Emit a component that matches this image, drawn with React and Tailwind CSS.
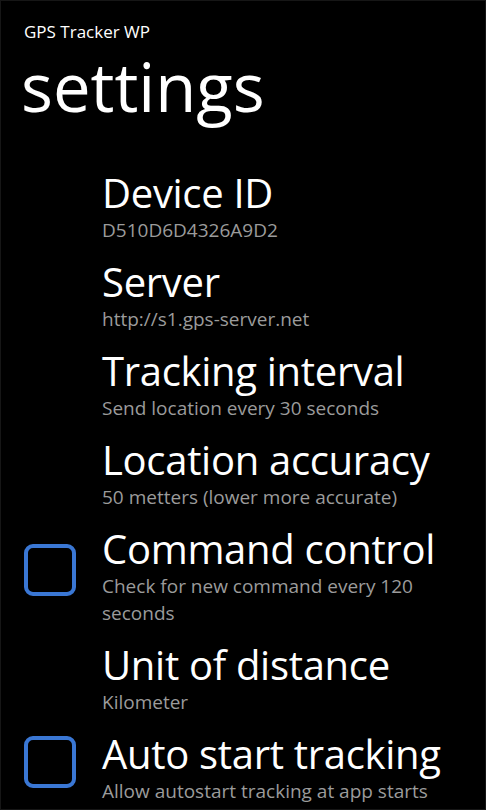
import React from "react";

const items = [
  { title: "Device ID", sub: ["D510D6D4326A9D2"] },
  { title: "Server", sub: ["http://s1.gps-server.net"] },
  { title: "Tracking interval", sub: ["Send location every 30 seconds"] },
  { title: "Location accuracy", sub: ["50 metters (lower more accurate)"] },
  { title: "Command control", sub: ["Check for new command every 120", "seconds"], check: true },
  { title: "Unit of distance", sub: ["Kilometer"] },
  { title: "Auto start tracking", sub: ["Allow autostart tracking at app starts"], check: true },
];

export default function App() {
  return (
    <div
      className="w-[486px] h-[810px] bg-black text-white overflow-hidden border border-[#161616]"
      style={{ fontFamily: '"Open Sans", "Noto Sans", sans-serif' }}
    >
      <div className="pl-[23px] pt-[19px] text-[17px] leading-[24px]">GPS Tracker WP</div>
      <div className="pl-[20px] mt-[2px] text-[67px] leading-[80px]">settings</div>
      <div className="mt-[43px] flex flex-col gap-[14px]">
        {items.map((it) => (
          <div key={it.title} className="flex items-center">
            <div className="w-[101px] shrink-0 flex pl-[23px]">
              {it.check && (
                <div className="w-[52px] h-[52px] mb-[12px] rounded-[9px] border-[4px] border-[#3a77d4]" />
              )}
            </div>
            <div className="flex flex-col">
              <div className="text-[40px] leading-[48px] tracking-[-0.3px]">{it.title}</div>
              {it.sub.map((s) => (
                <div key={s} className="text-[19px] leading-[27px] text-[#9b9b9b]">{s}</div>
              ))}
            </div>
          </div>
        ))}
      </div>
    </div>
  );
}
